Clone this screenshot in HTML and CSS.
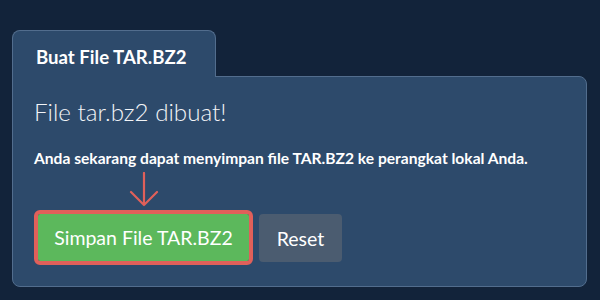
FILE: index.html
```html
<!DOCTYPE html>
<html><head><title>Buat File TAR.BZ2</title>
<meta charset="utf-8">
<link rel="stylesheet" href="styles.css">
</head>
<body>
<div class="card">
  <div class="tab">Buat File TAR.BZ2</div>
  <div class="panel">
    <h2 class="done">File tar.bz2 dibuat!</h2>
    <p class="note">Anda sekarang dapat menyimpan file TAR.BZ2 ke perangkat lokal Anda.</p>
    <div class="actions">
      <div class="save-wrap">
        <svg class="arrow" width="30" height="35" viewBox="0 0 30 35">
          <path d="M15 1 L15 33 M2 20 L15 33 L28 20" fill="none" stroke="#e0605a" stroke-width="2.2" stroke-linecap="round" stroke-linejoin="round"/>
        </svg>
        <button class="btn save">Simpan File TAR.BZ2</button>
      </div>
      <button class="btn reset">Reset</button>
    </div>
  </div>
</div>
</body>
</html>
```

FILE: styles.css
```css
body {
  margin: 0;
  background: #12233a;
  font-family: Lato, "Open Sans", sans-serif;
  color: #f2f4f7;
}

.card {
  padding: 30px 13px 0 12px;
}

.tab {
  position: relative;
  z-index: 1;
  display: inline-block;
  box-sizing: border-box;
  width: 204px;
  height: 47px;
  margin-bottom: -1px;
  padding: 15px 0 0 23px;
  background: #2d4a6b;
  border: 1px solid #526d8d;
  border-bottom: none;
  border-radius: 8px 8px 0 0;
  font-size: 18.6px;
  font-weight: bold;
  line-height: 22px;
  color: #ffffff;
}

.panel {
  box-sizing: border-box;
  height: 211px;
  padding: 20px 21px 0 21px;
  background: #2d4a6b;
  border: 1px solid #526d8d;
  border-radius: 0 8px 8px 8px;
}

.done {
  margin: 0;
  font-size: 24.2px;
  font-weight: 300;
  line-height: 29px;
}

.note {
  margin: 23px 0 0 0;
  font-size: 15.6px;
  font-weight: bold;
  line-height: 18px;
  color: #ffffff;
}

.actions {
  display: flex;
  gap: 10px;
  margin: 47px 0 0 4px;
}

.save-wrap {
  position: relative;
}

.arrow {
  position: absolute;
  left: 91px;
  top: -42px;
}

.btn {
  box-sizing: border-box;
  height: 47px;
  padding: 0 16px;
  border: none;
  border-radius: 4px;
  font-family: Lato, "Open Sans", sans-serif;
  font-size: 19.5px;
  color: #ffffff;
}

.save {
  width: 211px;
  background: #5cb85c;
  outline: 4px solid #e0605a;
  border-radius: 2px;
}

.reset {
  width: 83px;
  height: 48px;
  background: #4b5c70;
}
```
